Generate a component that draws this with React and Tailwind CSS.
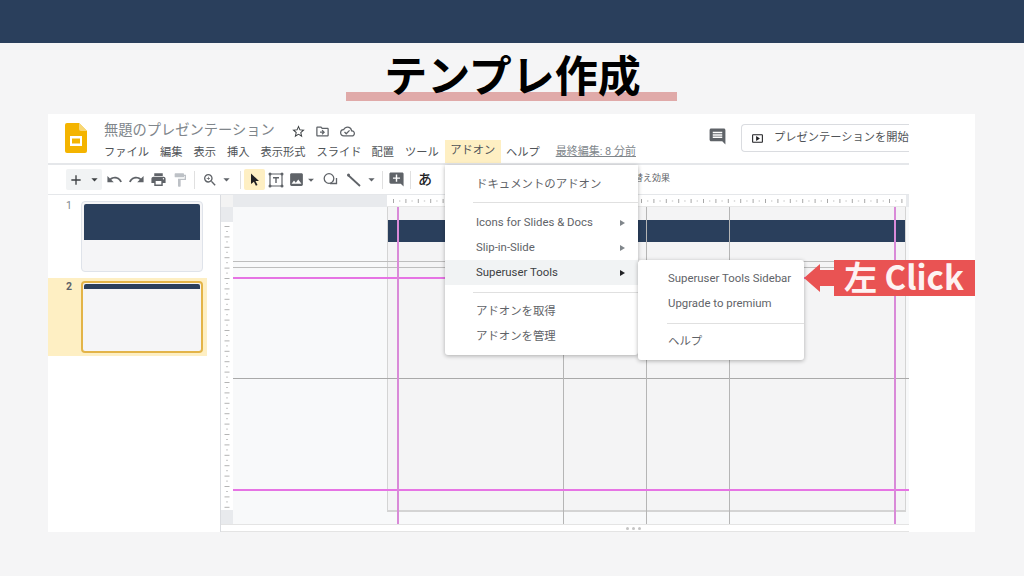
import React from 'react';
import {
  MdAdd, MdArrowDropDown, MdUndo, MdRedo, MdPrint, MdFormatPaint, MdZoomIn, MdImage,
  MdStarBorder, MdOutlineDriveFileMove, MdOutlineCloudDone, MdComment, MdAddComment, MdOutlineSmartDisplay,
} from 'react-icons/md';

const jp = "font-['Roboto','Noto_Sans_CJK_JP',sans-serif]";

const MenuItem = ({ label, arrow, active }) => (
  <div className={`flex h-[25px] items-center justify-between whitespace-nowrap pl-[31px] pr-[13px] text-[11.4px] ${active ? 'bg-[#f1f3f4] text-[#3c4043]' : 'text-[#5f6368]'}`}>
    <span>{label}</span>
    {arrow && <span className={`h-0 w-0 border-y-[3px] border-l-[5px] border-y-transparent ${active ? 'border-l-[#202124]' : 'border-l-[#80868b]'}`} />}
  </div>
);

const Sep = () => <div className="mx-[6px] h-[18px] w-px bg-[#e0e0e0]" />;

const TopRuler = () => (
  <svg width="519" height="12" className="block">
    <rect width="519" height="12" fill="#fff" />
    <rect y="11" width="519" height="1" fill="#e8e8e8" />
    {Array.from({ length: 42 }).map((_, i) => (
      <g key={i}>
        <rect x={6 + i * 12.4} y="4" width="1" height="4" fill="#a8a8a8" />
        <rect x={12 + i * 12.4} y="5.5" width="1.4" height="1" fill="#c0c0c0" />
      </g>
    ))}
  </svg>
);

const LeftRuler = () => (
  <svg width="12" height="288" className="block">
    <rect width="12" height="288" fill="#fff" />
    {Array.from({ length: 28 }).map((_, i) => (
      <g key={i}>
        <rect x="3.5" y={4 + i * 10.4} width="5" height="1" fill="#b4b4b4" />
        <rect x="5" y={9 + i * 10.4} width="2" height="1" fill="#c8c8c8" />
      </g>
    ))}
  </svg>
);

export default function App() {
  return (
    <div className={`flex h-[576px] w-[1024px] flex-col overflow-hidden bg-[#f5f5f6] ${jp}`}>
      <div className="h-[43px] bg-[#2a3f5c]" />

      {/* Title */}
      <div className="flex h-[71px] justify-center pr-px pt-[8px]">
        <div className="relative flex h-[50px] w-[331px] justify-center">
          <div className="absolute bottom-0 left-0 right-0 h-[9px] bg-[#e0aaa9]" />
          <h1 className="relative ml-[2px] text-[43px] font-bold leading-[52px] text-black">テンプレ作成</h1>
        </div>
      </div>

      {/* Screenshot */}
      <div className="relative ml-[48px] flex h-[418px] w-[927px] bg-white">
        <div className="flex w-[861px] flex-col">
          {/* Header */}
          <div className="flex h-[51px] shrink-0 border-b-2 border-[#e5e7ea] pl-[17px]">
            <svg width="22" height="30" viewBox="0 0 22 30" className="mt-[9px]">
              <path d="M2 0h12l8 8v20a2 2 0 0 1-2 2H2a2 2 0 0 1-2-2V2a2 2 0 0 1 2-2z" fill="#f4b400" />
              <path d="M14 0l8 8h-6a2 2 0 0 1-2-2z" fill="#f8d774" />
              <path d="M5 13h12v10H5z M7 15.500v5h8v-5z" fill="#fff" fillRule="evenodd" />
            </svg>
            <div className="ml-[17px] flex w-[579px] flex-col">
              <div className="flex h-[32px] items-center pt-[4px]">
                <span className="w-[171px] text-[14.25px] text-[#80868b]">無題のプレゼンテーション</span>
                <MdStarBorder className="ml-[16px] text-[15px] text-[#3c4043]" />
                <MdOutlineDriveFileMove className="ml-[9px] text-[15px] text-[#5f6368]" />
                <MdOutlineCloudDone className="ml-[10px] text-[15px] text-[#5f6368]" />
              </div>
              <div className="flex h-[19px] items-center whitespace-nowrap text-[11.25px] text-[#4f5357]">
                <span>ファイル</span>
                <span className="ml-[11px]">編集</span>
                <span className="ml-[11px]">表示</span>
                <span className="ml-[11px]">挿入</span>
                <span className="ml-[11px]">表示形式</span>
                <span className="ml-[11px]">スライド</span>
                <span className="ml-[10px]">配置</span>
                <span className="ml-[11px]">ツール</span>
                <span className="ml-[6px] flex h-[23px] w-[56px] items-center justify-center self-end bg-[#feefc3]">アドオン</span>
                <span className="ml-[5px]">ヘルプ</span>
                <span className="mb-[2px] ml-[16px] text-[11px] text-[#80868b] underline">最終編集: 8 分前</span>
              </div>
            </div>
            <div className="ml-[25px] flex items-start pt-[13px]">
              <MdComment className="text-[19px] text-[#5f6368]" />
            </div>
            <div className="ml-[14px] mt-[10px] flex h-[28px] flex-1 items-center overflow-hidden whitespace-nowrap rounded-l-[4px] border-y border-l border-[#dadce0] pl-[9px] text-[11.25px] text-[#4f5357]">
              <MdOutlineSmartDisplay className="mr-[10px] shrink-0 text-[13px] text-[#202124]" />
              プレゼンテーションを開始
            </div>
          </div>

          {/* Toolbar */}
          <div className="flex h-[30px] shrink-0 items-center border-b border-[#e5e7ea] pl-[18px] text-[#5f6368]">
            <div className="flex h-[21px] w-[36px] items-center rounded-[2px] bg-[#f1f3f4] pl-[2px]">
              <MdAdd className="text-[16px] text-[#3c4043]" />
              <MdArrowDropDown className="ml-[3px] text-[15px] text-[#3c4043]" />
            </div>
            <MdUndo className="ml-[4px] text-[17px]" />
            <MdRedo className="ml-[5px] text-[17px]" />
            <MdPrint className="ml-[5px] text-[17px]" />
            <MdFormatPaint className="ml-[5px] text-[16px] text-[#bdc1c6]" />
            <Sep />
            <MdZoomIn className="ml-[1px] text-[16px]" />
            <MdArrowDropDown className="ml-[1px] text-[15px]" />
            <Sep />
            <div className="-ml-[3px] flex h-[21px] w-[21px] items-center justify-center rounded-[2px] bg-[#feefc3]">
              <svg width="12" height="13" viewBox="0 0 12 13"><path d="M2 0.500l8 7.500H6.500l2 4-1.600 0.800-2-4L2 11z" fill="#202124" /></svg>
            </div>
            <svg width="16" height="16" viewBox="0 0 16 16" className="ml-[3px]">
              <path d="M2 2h12v12H2z" fill="none" stroke="#5f6368" strokeWidth="1.200" />
              <path d="M5 5h6v1.500H8.700V11H7.300V6.500H5z" fill="#5f6368" />
              <g fill="#5f6368"><circle cx="2" cy="2" r="1.500" /><circle cx="14" cy="2" r="1.500" /><circle cx="2" cy="14" r="1.500" /><circle cx="14" cy="14" r="1.500" /></g>
            </svg>
            <MdImage className="ml-[4px] text-[17px]" />
            <MdArrowDropDown className="-ml-[1px] text-[14px]" />
            <svg width="16" height="16" viewBox="0 0 16 16" className="ml-[4px]">
              <circle cx="7" cy="6.500" r="4.800" fill="none" stroke="#5f6368" strokeWidth="1.300" />
              <path d="M8 11.500h6.500V6" fill="none" stroke="#5f6368" strokeWidth="1.300" />
            </svg>
            <svg width="16" height="16" viewBox="0 0 16 16" className="ml-[8px]">
              <path d="M2 3l12 11" stroke="#5f6368" strokeWidth="1.800" />
              <circle cx="2.500" cy="3" r="1.500" fill="#5f6368" />
            </svg>
            <MdArrowDropDown className="ml-[2px] text-[15px]" />
            <div className="ml-[3px] mr-[5px] h-[18px] w-px bg-[#e0e0e0]" />
            <MdAddComment className="text-[17px]" />
            <div className="mx-[5px] h-[18px] w-px bg-[#e0e0e0]" />
            <span className="ml-[2px] text-[14px] font-medium text-[#202124]">あ</span>
            <div className="mb-px ml-[184px] whitespace-nowrap text-[9px] text-[#5f6368]">切り替え効果</div>
          </div>

          <div className="flex min-h-0 flex-1">
            {/* Slide strip */}
            <div className="flex w-[173px] shrink-0 flex-col border-r border-[#dadce0] pt-[6px]">
              <div className="flex h-[71px] w-[159px]">
                <span className="w-[33px] pl-[18px] text-[10.5px] leading-[10px] text-[#80868b]">1</span>
                <div className="flex h-[71px] w-[122px] flex-col overflow-hidden rounded-[4px] border border-[#dfe3ea] bg-[#f5f5f7] p-[2px]">
                  <div className="h-[36px] rounded-t-[2px] bg-[#2a3f5c]" />
                </div>
              </div>
              <div className="mt-[6px] flex h-[78px] w-[159px] items-center bg-[#feefc3]">
                <span className="-mt-[60px] w-[33px] pl-[18px] text-[10.5px] font-bold leading-[10px] text-[#5f6368]">2</span>
                <div className="flex h-[72px] w-[122px] flex-col overflow-hidden rounded-[4px] border-2 border-[#e3b448] bg-[#f5f5f7] p-px">
                  <div className="h-[5px] rounded-t-[2px] bg-[#2a3f5c]" />
                </div>
              </div>
            </div>

            {/* Editor */}
            <div className="flex min-w-0 flex-1 flex-col">
              <div className="flex h-[12px] shrink-0">
                <div className="w-[12px] bg-[#f3f3f3]" />
                <div className="w-[154px] bg-[#e8eaed]" />
                <TopRuler />
                <div className="w-[3px] bg-[#e8eaed]" />
              </div>
              <div className="flex min-h-0 flex-1">
                <div className="flex w-[12px] shrink-0 flex-col border-r border-[#e8eaed]">
                  <div className="h-[15px] bg-[#e8eaed]" />
                  <LeftRuler />
                  <div className="flex-1 bg-[#e8eaed]" />
                </div>
                <div className="relative flex-1 bg-[#f8f9fa] pl-[154px] pr-[3px]">
                  <div className="h-[305px] border-x border-b-2 border-[#d4d4d4] bg-[#f4f4f5] pt-[13px]">
                    <div className="h-[22px] bg-[#2a3f5c]" />
                  </div>

                  {/* Guides */}
                  <div className="absolute inset-x-0 top-[54px] h-px bg-[#bdbdbd]" />
                  <div className="absolute inset-x-0 top-[60px] h-px bg-[#bdbdbd]" />
                  <div className="absolute inset-x-0 top-[171px] h-px bg-[#a9a9a9]" />
                  <div className="absolute inset-y-0 left-[330px] w-px bg-[#b5b5b5]" />
                  <div className="absolute inset-y-0 left-[413px] w-px bg-[#b5b5b5]" />
                  <div className="absolute inset-y-0 left-[496px] w-px bg-[#b5b5b5]" />
                  <div className="absolute inset-x-0 top-[70px] h-[2px] bg-[#e674e4]" />
                  <div className="absolute inset-x-0 top-[282px] h-[2px] bg-[#e674e4]" />
                  <div className="absolute inset-y-0 left-[164px] w-[2px] bg-[#d98ad8]" />
                  <div className="absolute inset-y-0 left-[661px] w-[2px] bg-[#d98ad8]" />
                </div>
              </div>
              <div className="relative flex h-[8px] shrink-0 items-center justify-center gap-[3px] border-y border-[#e4e4e4] bg-white pl-[137px]">
                <span className="h-[3px] w-[3px] rounded-full bg-[#c4c4c4]" />
                <span className="h-[3px] w-[3px] rounded-full bg-[#c4c4c4]" />
                <span className="h-[3px] w-[3px] rounded-full bg-[#c4c4c4]" />
              </div>
            </div>
          </div>
        </div>

        {/* Add-on menu */}
        <div className="absolute left-[397px] top-[51px] h-[190px] w-[193px] rounded-b-[3px] bg-white shadow-[0_1px_4px_rgba(0,0,0,0.3)]">
          <div className="pb-[5px] pt-[7px]"><MenuItem label="ドキュメントのアドオン" /></div>
          <div className="ml-[28px] h-px bg-[#e0e0e0]" />
          <div className="pb-[7px] pt-[7px]">
            <MenuItem label="Icons for Slides & Docs" arrow />
            <MenuItem label="Slip-in-Slide" arrow />
            <MenuItem label="Superuser Tools" arrow active />
          </div>
          <div className="ml-[28px] h-px bg-[#e0e0e0]" />
          <div className="pt-[6px]">
            <MenuItem label="アドオンを取得" />
            <MenuItem label="アドオンを管理" />
          </div>

          {/* Submenu */}
          <div className="absolute left-[193px] top-[95px] h-[100px] w-[166px] rounded-[3px] bg-white py-[6px] shadow-[0_1px_4px_rgba(0,0,0,0.3)]">
            <div className="-ml-px"><MenuItem label="Superuser Tools Sidebar" /></div>
            <div className="-ml-px"><MenuItem label="Upgrade to premium" /></div>
            <div className="ml-[29px] mt-[7px] h-px bg-[#e0e0e0]" />
            <div className="-ml-px mt-[5px]"><MenuItem label="ヘルプ" /></div>
          </div>
        </div>

        {/* Callout */}
        <div className="absolute left-[756px] top-[146px] flex h-[36px] items-center">
          <svg width="30" height="30" viewBox="0 0 30 30" className="block">
            <path d="M0 15L16 1v6h14v16H16v6z" fill="#e95353" />
          </svg>
          <div className="flex h-[36px] w-[141px] items-center whitespace-nowrap bg-[#e95353] pb-[3px] pl-[10px] font-['Noto_Sans_CJK_JP',sans-serif] text-[33px] font-bold leading-none text-[#fdf3f3]">
            左 Click
          </div>
        </div>
      </div>
    </div>
  );
}
